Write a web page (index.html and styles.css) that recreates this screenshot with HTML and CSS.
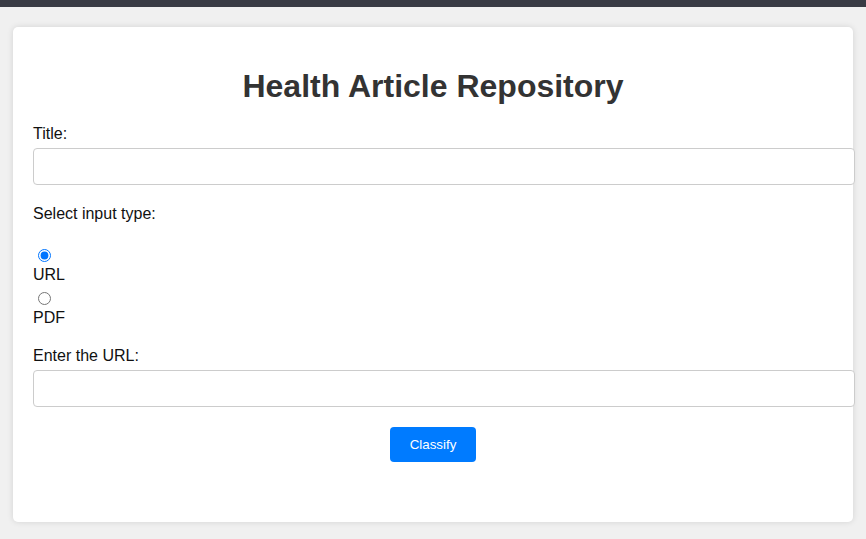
FILE: index.html
```html
<!DOCTYPE html>
<html lang="en">
<head>
<meta charset="utf-8">
<title>Health Article Repository</title>
<link rel="stylesheet" href="styles.css">
</head>
<body>
<div class="topbar"></div>
<div class="container">
  <h1 class="title">Health Article Repository</h1>
  <form class="form">
    <label class="label" for="title">Title:</label>
    <input class="text-input" type="text" id="title">
    <label class="label">Select input type:</label>
    <div class="radio-group">
      <div class="radio-line"><input type="radio" name="type" id="url" checked></div>
      <label class="label" for="url">URL</label>
      <div class="radio-line"><input type="radio" name="type" id="pdf"></div>
      <label class="label" for="pdf">PDF</label>
    </div>
    <label class="label" for="urlin">Enter the URL:</label>
    <input class="text-input" type="text" id="urlin">
    <div class="actions"><button class="btn" type="button">Classify</button></div>
  </form>
</div>
</body>
</html>
```

FILE: styles.css
```css
html, body {
  margin: 0;
  padding: 0;
}
body {
  background: #f0f0f0;
  font-family: "Liberation Sans", Arial, sans-serif;
  font-size: 16px;
}
.topbar {
  height: 7px;
  background: #393b44;
}
.container {
  max-width: 800px;
  margin: 20px auto;
  padding: 20px;
  background: #fff;
  border-radius: 5px;
  box-shadow: 0 0 6px rgba(0, 0, 0, 0.12);
}
.title {
  margin: 21px 0 20px;
  text-align: center;
  font-size: 32px;
  font-weight: bold;
  color: #333;
}
.form {
  margin: 0 0 40px;
}
.label {
  display: block;
  margin-bottom: 5px;
  color: #111;
}
.text-input {
  display: block;
  width: 100%;
  padding: 10px;
  margin: 0 0 20px;
  border: 1px solid #ccc;
  border-radius: 4px;
  font-family: "Liberation Sans", Arial, sans-serif;
  font-size: 13.33px;
  box-sizing: content-box;
  background: #fff;
}
.radio-group {
  margin-top: 23px;
  margin-bottom: 20px;
}
.radio-line input {
  margin: 3px 3px 0 5px;
}
.actions {
  display: flex;
  justify-content: center;
}
.btn {
  background: #007bff;
  color: #fff;
  border: none;
  border-radius: 4px;
  padding: 10px 20px;
  font-family: "Liberation Sans", Arial, sans-serif;
  font-size: 13.33px;
  cursor: pointer;
}
```
